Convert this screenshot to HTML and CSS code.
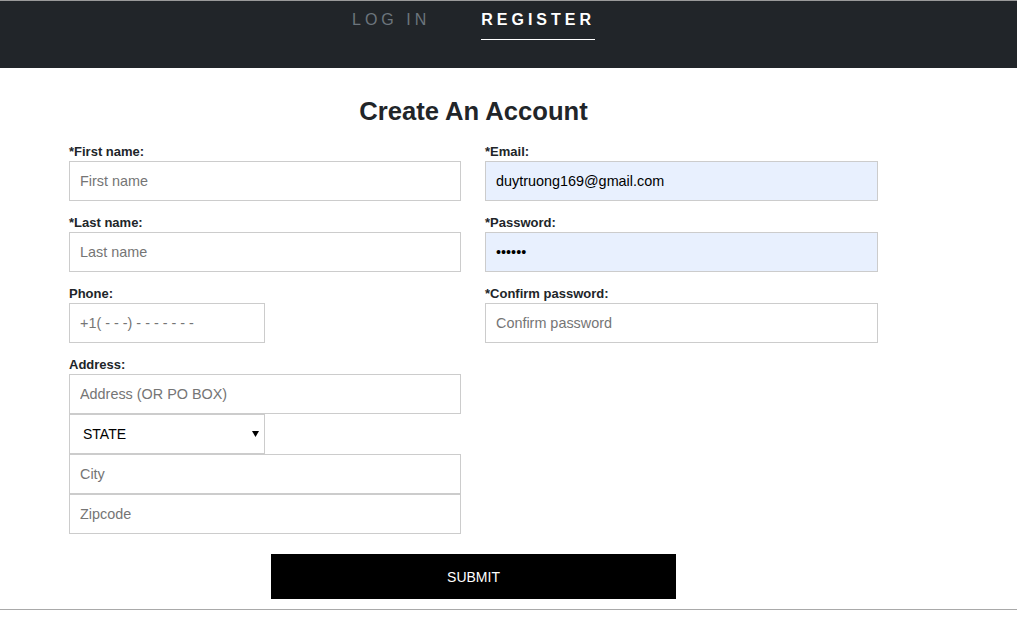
FILE: index.html
```html
<!DOCTYPE html>
<html>
<head>
<meta charset="utf-8">
<link rel="stylesheet" href="styles.css">
</head>
<body>
<header class="topbar">
  <div class="wrap">
    <nav class="tabs">
      <a class="tab">LOG IN</a>
      <a class="tab active">REGISTER</a>
    </nav>
  </div>
</header>
<main class="wrap">
  <h1 class="title">Create An Account</h1>
  <form class="form">
    <div class="cols">
      <div class="col">
        <div class="field">
          <label class="lbl">*First name:</label>
          <input class="inp" type="text" placeholder="First name">
        </div>
        <div class="field">
          <label class="lbl">*Last name:</label>
          <input class="inp" type="text" placeholder="Last name">
        </div>
        <div class="field">
          <label class="lbl">Phone:</label>
          <input class="inp half" type="text" placeholder="+1( - - -) - - - - - - -">
        </div>
        <div class="field last">
          <label class="lbl">Address:</label>
          <input class="inp" type="text" placeholder="Address (OR PO BOX)">
          <div class="selwrap half">
            <select class="sel"><option>STATE</option></select>
            <svg class="caret" width="7" height="6" viewBox="0 0 7 6"><polygon points="0,0 7,0 3.5,6" fill="#000"/></svg>
          </div>
          <input class="inp" type="text" placeholder="City">
          <input class="inp" type="text" placeholder="Zipcode">
        </div>
      </div>
      <div class="col">
        <div class="field">
          <label class="lbl">*Email:</label>
          <input class="inp filled" type="email" value="duytruong169@gmail.com">
        </div>
        <div class="field">
          <label class="lbl">*Password:</label>
          <input class="inp filled" type="password" value="secret">
        </div>
        <div class="field">
          <label class="lbl">*Confirm password:</label>
          <input class="inp" type="password" placeholder="Confirm password">
        </div>
      </div>
    </div>
    <button class="submit" type="button">SUBMIT</button>
  </form>
</main>
<hr class="rule">
</body>
</html>
```

FILE: styles.css
```css
* { box-sizing: border-box; }
html, body { margin: 0; padding: 0; background: #fff; }
body { font-family: "Liberation Sans", Arial, sans-serif; color: #212529; }

.wrap { width: 809px; margin-left: 69px; }

.topbar {
  background: #212529;
  border-top: 1px solid #9a9a9a;
  height: 68px;
  padding-top: 9px;
}
.tabs {
  display: flex;
  justify-content: center;
  gap: 51px;
}
.tab {
  font-size: 16px;
  line-height: 20px;
  letter-spacing: 4px;
  color: #6c757d;
  padding-bottom: 9px;
}
.tab.active {
  color: #fff;
  font-weight: bold;
  border-bottom: 1px solid #fff;
}

.title {
  margin: 28px 0 0;
  text-align: center;
  font-size: 25.6px;
  line-height: 31px;
  font-weight: bold;
  color: #212529;
}

.form { margin-top: 17px; }
.cols {
  display: grid;
  grid-template-columns: 392px 393px;
  column-gap: 24px;
}
.field { margin-bottom: 14px; }
.field.last { margin-bottom: 0; }
.lbl {
  display: block;
  font-size: 13px;
  line-height: 15px;
  font-weight: bold;
  margin-bottom: 2px;
  color: #212529;
}
.inp {
  display: block;
  width: 100%;
  height: 40px;
  border: 1px solid #cccccc;
  padding: 0 10px;
  font-family: "Liberation Sans", Arial, sans-serif;
  font-size: 14.4px;
  color: #000;
  background: #fff;
  outline: none;
  margin: 0;
}
.inp::placeholder { color: #757575; }
.inp.filled { background: #e8f0fe; }
.half { width: 196px; }

.selwrap { position: relative; height: 40px; }
.sel {
  -webkit-appearance: none;
  appearance: none;
  display: block;
  width: 100%;
  height: 40px;
  border: 1px solid #cccccc;
  background: #fff;
  padding: 0 0 0 13px;
  font-family: "Liberation Sans", Arial, sans-serif;
  font-size: 14px;
  color: #000;
  border-radius: 0;
  outline: none;
  margin: 0;
}
.caret {
  position: absolute;
  right: 6px;
  top: 17px;
  pointer-events: none;
}

.submit {
  display: block;
  width: 405px;
  height: 45px;
  margin: 20px auto 0;
  background: #000;
  color: #fff;
  border: none;
  font-family: "Liberation Sans", Arial, sans-serif;
  font-size: 14px;
  padding: 0;
}

.rule {
  margin: 10px 0 0;
  border: none;
  border-top: 1px solid #a9a9a9;
  height: 0;
}
```
